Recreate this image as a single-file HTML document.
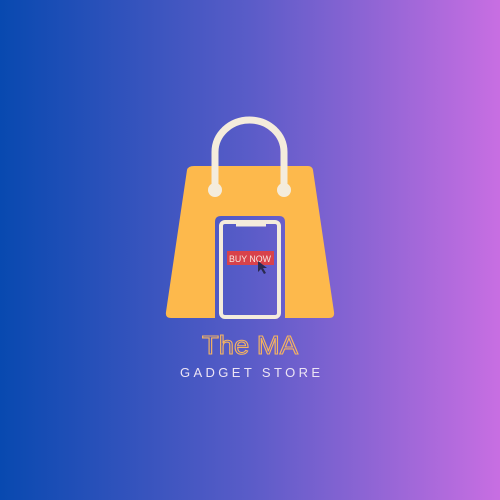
<!DOCTYPE html>
<html><head><style>
html,body{margin:0;padding:0}
body{width:500px;height:500px;overflow:hidden;background:linear-gradient(90deg,#0849b0 0%,#5a5cc8 50%,#c86ee2 100%);font-family:"Liberation Sans",sans-serif}
</style></head><body>
<svg width="500" height="500" viewBox="0 0 500 500" style="position:absolute;left:0;top:0">
<!-- bag -->
<path d="M194,166 H308 Q312,166 313,170 L334,312 Q335,318 329,318 H285 V222 Q285,216 279,216 H221 Q215,216 215,222 V318 H171 Q165,318 166,312 L187,170 Q188,166 194,166 Z" fill="#fdb94c"/>
<!-- handle -->
<path d="M215,190 V152 A34.5,32 0 0 1 284,152 V190" fill="none" stroke="#f4ecdc" stroke-width="7"/>
<circle cx="215" cy="190" r="7" fill="#f4ecdc"/>
<circle cx="284" cy="190" r="7" fill="#f4ecdc"/>
<!-- phone -->
<rect x="221" y="222" width="58" height="95" rx="4" fill="none" stroke="#f4ecdc" stroke-width="4"/>
<rect x="236" y="224" width="30" height="2.5" fill="#f4ecdc"/>
<rect x="227" y="251" width="47" height="14" fill="#d8424b"/>
<text x="250" y="262" text-anchor="middle" font-family="Liberation Sans" font-size="9.5" fill="#f8e8e0" textLength="42" lengthAdjust="spacingAndGlyphs">BUY NOW</text>
<path d="M258,261 L258,272 L261,269 L264,274 L266,273 L263,268 L267,268 Z" fill="#2a2a50"/>
<text x="250" y="354" text-anchor="middle" font-family="Liberation Sans" font-size="26" fill="none" stroke="#f6b460" stroke-width="1.1" textLength="96" lengthAdjust="spacingAndGlyphs">The MA</text>
<text x="250" y="377" text-anchor="middle" font-family="Liberation Sans" font-size="13" fill="#ece4f4" textLength="140" lengthAdjust="spacing">GADGET STORE</text>
</svg>
</body></html>
